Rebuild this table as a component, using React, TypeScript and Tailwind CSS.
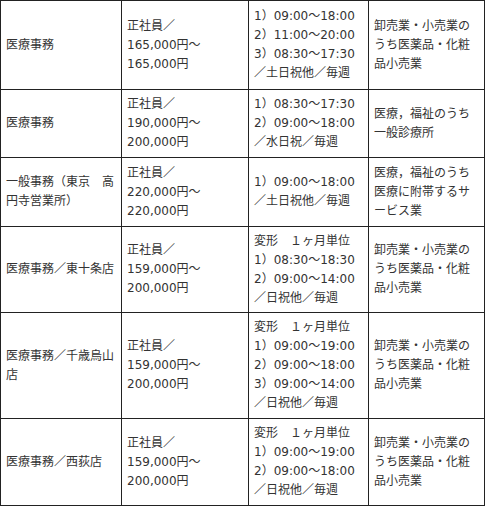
import React from "react";

type Row = {
  h: number;
  job: string;
  pay: string[];
  hours: string[];
  biz: string;
};

const rows: Row[] = [
  {
    h: 89,
    job: "医療事務",
    pay: ["正社員／", "165,000円～", "165,000円"],
    hours: ["1）09:00～18:00", "2）11:00～20:00", "3）08:30～17:30", "／土日祝他／毎週"],
    biz: "卸売業・小売業のうち医薬品・化粧品小売業",
  },
  {
    h: 68,
    job: "医療事務",
    pay: ["正社員／", "190,000円～", "200,000円"],
    hours: ["1）08:30～17:30", "2）09:00～18:00", "／水日祝／毎週"],
    biz: "医療，福祉のうち一般診療所",
  },
  {
    h: 69,
    job: "一般事務（東京　高円寺営業所）",
    pay: ["正社員／", "220,000円～", "220,000円"],
    hours: ["1）09:00～18:00", "／土日祝他／毎週"],
    biz: "医療，福祉のうち医療に附帯するサービス業",
  },
  {
    h: 86,
    job: "医療事務／東十条店",
    pay: ["正社員／", "159,000円～", "200,000円"],
    hours: ["変形　１ヶ月単位", "1）08:30～18:30", "2）09:00～14:00", "／日祝他／毎週"],
    biz: "卸売業・小売業のうち医薬品・化粧品小売業",
  },
  {
    h: 106,
    job: "医療事務／千歳烏山店",
    pay: ["正社員／", "159,000円～", "200,000円"],
    hours: [
      "変形　１ヶ月単位",
      "1）09:00～19:00",
      "2）09:00～18:00",
      "3）09:00～14:00",
      "／日祝他／毎週",
    ],
    biz: "卸売業・小売業のうち医薬品・化粧品小売業",
  },
  {
    h: 87,
    job: "医療事務／西荻店",
    pay: ["正社員／", "159,000円～", "200,000円"],
    hours: ["変形　１ヶ月単位", "1）09:00～19:00", "2）09:00～18:00", "／日祝他／毎週"],
    biz: "卸売業・小売業のうち医薬品・化粧品小売業",
  },
];

const cell = "border border-[#222] px-[5px] py-0 align-middle break-all";

export default function App() {
  return (
    <div className="bg-white w-[486px] h-[506px] overflow-hidden">
      <table
        className="table-fixed border-collapse text-[12px] leading-[19px] text-[#333]"
        style={{ fontFamily: '"DejaVu Sans", "Noto Sans CJK JP", sans-serif' }}
      >
        <colgroup>
          <col className="w-[121px]" />
          <col className="w-[127px]" />
          <col className="w-[120px]" />
          <col className="w-[116px]" />
        </colgroup>
        <tbody>
          {rows.map((r, i) => (
            <tr key={i} style={{ height: r.h }}>
              <td className={cell}>{r.job}</td>
              <td className={cell}>
                {r.pay.map((l, j) => (
                  <div key={j}>{l}</div>
                ))}
              </td>
              <td className={cell}>
                {r.hours.map((l, j) => (
                  <div key={j} className="whitespace-nowrap">{l}</div>
                ))}
              </td>
              <td className={cell}>{r.biz}</td>
            </tr>
          ))}
        </tbody>
      </table>
    </div>
  );
}
